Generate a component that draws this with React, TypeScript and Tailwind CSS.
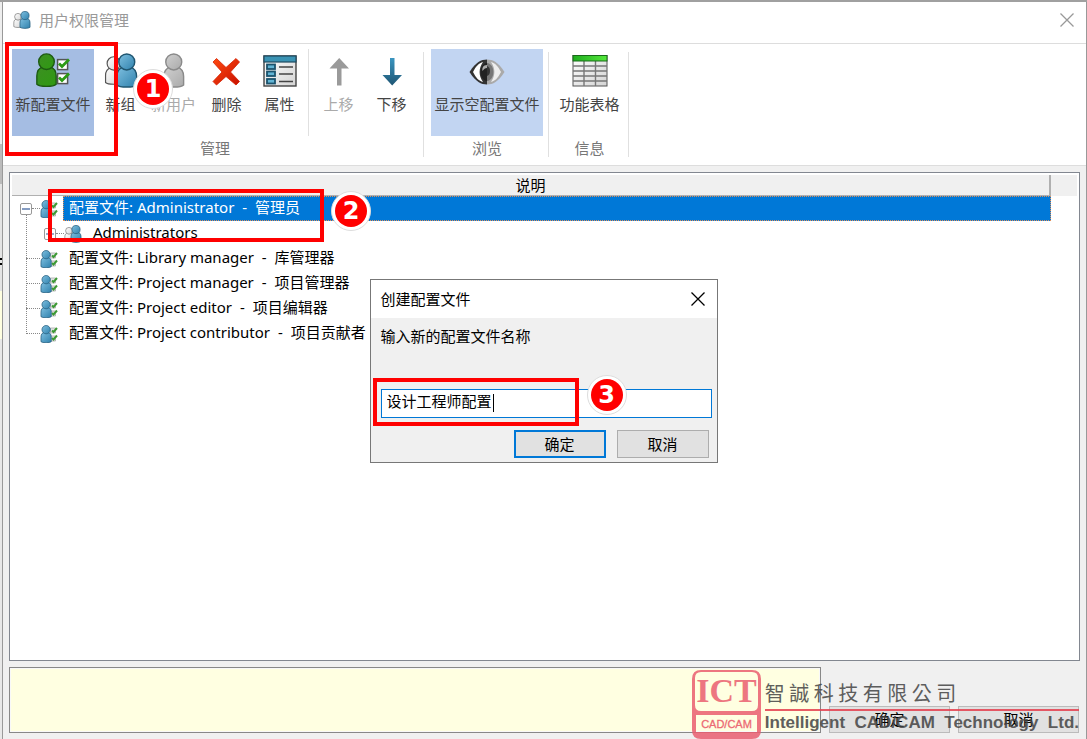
import { useState } from "react";
import type { ReactNode } from "react";

const profiles = [
  { name: "Library manager", local: "库管理器" },
  { name: "Project manager", local: "项目管理器" },
  { name: "Project editor", local: "项目编辑器" },
  { name: "Project contributor", local: "项目贡献者" }
];

const BODY = "M2 34 V25 C2 18 5 16 9 15 H16 C20 16 23 18 23 25 V34 C20 37 5 37 2 34 Z";

function Person({ x, y, scale, fill, stroke }: { x: number; y: number; scale: number; fill: string; stroke: string }) {
  return (
    <g transform={`translate(${x} ${y}) scale(${scale})`} fill={fill} stroke={stroke} strokeWidth="1.5">
      <path d={BODY} />
      <circle cx="12.5" cy="9.5" r="8.5" />
    </g>
  );
}

function Defs() {
  return (
    <svg className="absolute size-0" aria-hidden="true">
      <defs>
        <linearGradient id="green" x2="1" y2="1"><stop offset="0" stopColor="#3c8f22" /><stop offset="1" stopColor="#2f9a12" /></linearGradient>
        <linearGradient id="blue" x2="1" y2="1"><stop offset="0" stopColor="#7fc0e0" /><stop offset="1" stopColor="#2f81ad" /></linearGradient>
        <linearGradient id="silver" x2="1" y2="1"><stop offset="0" stopColor="#fff" /><stop offset="1" stopColor="#d4d4d4" /></linearGradient>
        <linearGradient id="gray" x2="1" y2="1"><stop offset="0" stopColor="#d0d0d0" /><stop offset="1" stopColor="#aaa" /></linearGradient>
        <linearGradient id="red" x2="1" y2="1"><stop offset="0" stopColor="#ff4a10" /><stop offset="1" stopColor="#c81000" /></linearGradient>
        <linearGradient id="lime" x2="1"><stop offset="0" stopColor="#1fae1f" /><stop offset="1" stopColor="#55e83c" /></linearGradient>
        <linearGradient id="steel" x2="0" y2="1"><stop offset="0" stopColor="#3a95c0" /><stop offset="1" stopColor="#1f5674" /></linearGradient>
      </defs>
    </svg>
  );
}

function ProfileIcon() {
  return (
    <svg viewBox="0 0 36 36" className="size-9 shrink-0">
      <Person x={0} y={0} scale={0.92} fill="url(#green)" stroke="#1d5a12" />
      <g fill="#fff" stroke="#555" strokeWidth="1.5">
        <rect x="22.6" y="6.6" width="10" height="10" />
        <rect x="22.6" y="20.6" width="10" height="10" />
      </g>
      <path d="M24 10.5 L27 13.5 L34 6.5 M24 24.5 L27 27.5 L34 20.5" fill="none" stroke="#2b9a14" strokeWidth="2.8" />
    </svg>
  );
}

function GroupIcon() {
  return (
    <svg viewBox="0 0 36 36" className="size-9 shrink-0">
      <Person x={1} y={3} scale={0.78} fill="url(#silver)" stroke="#555" />
      <Person x={12} y={0} scale={0.94} fill="url(#blue)" stroke="#1f5570" />
    </svg>
  );
}

function UserIcon() {
  return (
    <svg viewBox="0 0 36 36" className="size-9 shrink-0">
      <Person x={6} y={0} scale={0.94} fill="url(#gray)" stroke="#8a8a8a" />
    </svg>
  );
}

function DeleteIcon() {
  return (
    <svg viewBox="0 0 36 36" className="size-9 shrink-0">
      <path d="M4 9 L7.5 5.5 L17 14.5 L27 5.5 L30.500 9 L21.500 19 L30.500 28.5 L27 32 L17 23.500 L7.500 32 L4 28.500 L13 19 Z" fill="url(#red)" stroke="#d42000" strokeWidth="0.8" strokeLinejoin="round" />
    </svg>
  );
}

function PropertiesIcon() {
  return (
    <svg viewBox="0 0 36 36" className="size-9 shrink-0">
      <rect x="2" y="3" width="32" height="30" fill="url(#silver)" stroke="#444" strokeWidth="1.4" />
      <rect x="2" y="3" width="32" height="6" fill="#3a93b4" stroke="#1f4a60" strokeWidth="1.2" />
      <g fill="#62b4d4" stroke="#1b526c" strokeWidth="1.8">
        <rect x="5" y="11.500" width="8" height="4.500" />
        <rect x="5" y="18.500" width="8" height="4.500" />
        <rect x="5" y="26" width="8" height="4.500" />
      </g>
      <path d="M17 14 H31 M17 21 H31 M17 28.500 H31" stroke="#444" strokeWidth="1.6" />
    </svg>
  );
}

function ArrowIcon({ down }: { down?: boolean }) {
  return (
    <svg viewBox="0 0 36 36" className="size-9 shrink-0">
      {down ? (
        <path d="M16 5 H20.500 V22 H28 L18.200 32.500 L8.500 22 H16 Z" fill="url(#steel)" />
      ) : (
        <path d="M16 32.500 H20.500 V15.500 H28 L18.200 5 L8.500 15.500 H16 Z" fill="#9a9a9a" />
      )}
    </svg>
  );
}

function EyeIcon() {
  return (
    <svg viewBox="0 0 36 36" className="size-9 shrink-0">
      <path d="M0.500 19 C7 9 12 6.500 18 6.500 V31.500 C12 31.500 7 29 0.500 19 Z" fill="#333" />
      <path d="M35.500 19 C29 9 24 6.500 18 6.500 V31.500 C24 31.500 29 29 35.500 19 Z" fill="#aaa" />
      <path d="M4 19 C7 13 10 10 14 9 C9.500 16 9.500 22 14 29 C10 28 7 25 4 19 Z" fill="#fff" />
      <path d="M32 19 C29 13 26 10 22 9 C26.500 16 26.500 22 22 29 C26 28 29 25 32 19 Z" fill="#eee" />
      <path d="M18 10 V28 C9.500 27 9.500 11 18 10 Z" fill="#222" />
      <path d="M18 10 V28 C26.500 27 26.500 11 18 10 Z" fill="#777" />
      <path d="M18 12 C14 12 13 15 13.500 18 C15 16 16 15 18 15 Z" fill="#aaa" />
      <path d="M18 13 C22 14 22 22 18 23 Z" fill="#333" />
    </svg>
  );
}

function TableIcon() {
  return (
    <svg viewBox="0 0 36 36" className="size-9 shrink-0">
      <rect x="1" y="2.500" width="34" height="30.500" fill="url(#silver)" stroke="#555" />
      <path d="M1 13 H35 M1 18 H35 M1 23 H35 M1 28 H35 M12 8 V33 M23.500 8 V33" stroke="#777" strokeWidth="1.400" />
      <rect x="1" y="2.500" width="34" height="5.500" fill="url(#lime)" stroke="#1a6a1a" />
    </svg>
  );
}

function SmallProfileIcon() {
  return (
    <svg viewBox="0 0 18 18" className="size-[18px] shrink-0">
      <path d="M10.500 3 H15.500 V8 H10.500 Z M10.500 11 H15.500 V16 H10.500 Z" fill="#e4e4e4" stroke="#aaa" strokeWidth="0.800" />
      <path d="M12 5.500 L13.500 7 L17 3 M12 13 L13.500 14.500 L17 10.500" fill="none" stroke="#3d9a34" strokeWidth="2" />
      <Person x={0} y={0} scale={0.49} fill="url(#blue)" stroke="#245c7c" />
    </svg>
  );
}

function SmallGroupIcon() {
  return (
    <svg viewBox="0 0 18 18" className="size-[18px] shrink-0">
      <Person x={0} y={2} scale={0.4} fill="url(#silver)" stroke="#666" />
      <Person x={6} y={0} scale={0.48} fill="url(#blue)" stroke="#245c7c" />
    </svg>
  );
}

function CloseIcon() {
  return (
    <svg viewBox="0 0 14 14" className="size-[14px]">
      <path d="M0.500 0.500 L13.500 13.500 M13.500 0.500 L0.500 13.500" stroke="currentColor" strokeWidth="1.300" />
    </svg>
  );
}

function Tool({ icon, label, className = "w-[53px]", disabled }: { icon: ReactNode; label: string; className?: string; disabled?: boolean }) {
  return (
    <button disabled={disabled} className={`flex h-[87px] shrink-0 flex-col items-center gap-[5px] pt-1 leading-5 whitespace-nowrap text-[#444] disabled:text-[#aaa] ${className}`}>
      {icon}
      {label}
    </button>
  );
}

function ToolGroup({ title, children }: { title: string; children: ReactNode }) {
  return (
    <section className="flex flex-col border-r border-[#e0e0e0] pr-[5px] pl-[7px]">
      <div className="-mt-[3px] flex">{children}</div>
      <h2 className="mt-[2px] text-center leading-5 text-[#777]">{title}</h2>
    </section>
  );
}

function Frame({ className }: { className: string }) {
  return <span className={`pointer-events-none absolute z-10 border-4 border-[#ff0000] ${className}`} />;
}

function Step({ n, className }: { n: number; className: string }) {
  return (
    <span className={`pointer-events-none absolute z-20 flex size-10 items-center justify-center rounded-full border border-[#ddd] bg-white ${className}`}>
      <span className="flex size-8 items-center justify-center rounded-full bg-[#ff0000] font-['DejaVu_Sans',sans-serif] text-2xl font-bold text-white">{n}</span>
    </span>
  );
}

function Expander({ open }: { open?: boolean }) {
  return (
    <button aria-label={open ? "折叠" : "展开"} className="flex size-3 shrink-0 items-center justify-center rounded-xs border border-[#999] bg-white text-[#345a9a]">
      <svg viewBox="0 0 8 8" className="size-2">
        <path d={open ? "M0 4 H8" : "M0 4 H8 M4 0 V8"} stroke="currentColor" strokeWidth="1.200" />
      </svg>
    </button>
  );
}

function ProfileName({ name, local }: { name: string; local: string }) {
  return (
    <>
      配置文件: {name} <span className="mx-1">-</span> {local}
    </>
  );
}

function Watermark() {
  return (
    <div className="pointer-events-none absolute right-2 bottom-0 flex items-end gap-1 opacity-85">
      <svg viewBox="0 0 69 70" className="h-[70px] w-[69px] shrink-0">
        <path
          fillRule="evenodd"
          fill="#ea5f70"
          d="M9 1 H60 Q69 1 69 10 V61 Q69 70 60 70 H9 Q0 70 0 61 V10 Q0 1 9 1 Z M9 3 Q3 3 3 9 V36 Q3 42 9 42 H60 Q66 42 66 36 V9 Q66 3 60 3 Z M4 46 V63 H65 V46 Z"
        />
        <text x="34.500" y="33" textAnchor="middle" fontFamily="Liberation Serif, serif" fontWeight="700" fontSize="34" fill="#ea5f70">ICT</text>
        <text x="34.500" y="59" textAnchor="middle" fontFamily="Liberation Sans, sans-serif" fontSize="11" fill="#ea4f62" stroke="#ea4f62" strokeWidth="0.300">CAD/CAM</text>
      </svg>
      <div className="pb-1 whitespace-pre text-[#444]">
        <p className="font-['Noto_Sans_CJK_TC',sans-serif] text-xl leading-8">智 誠 科 技 有 限 公 司</p>
        <div className="h-[2px] bg-[#e5404f]" />
        <p className="font-['Liberation_Sans',sans-serif] text-[17px] leading-6 font-bold">Intelligent  CAD/CAM  Technology  Ltd.</p>
      </div>
    </div>
  );
}

export default function App() {
  const [name, setName] = useState("设计工程师配置");

  return (
    <div className="relative flex min-h-screen overflow-hidden border-t-2 border-[#a0a0a0] bg-[#e8e8e8] font-['Noto_Sans','Noto_Sans_CJK_SC',sans-serif] text-[15px]">
      <Defs />
      <div className="flex w-[2px] shrink-0 flex-col">
        <div className="h-[142px] bg-[#eee]" />
        <div className="h-10 bg-[#bbb]" />
        <div className="h-[74px] bg-[#e4e4e4]" />
        <div className="h-[7px] border-y-2 border-black" />
        <div className="h-[26px] bg-[#e4e4e4]" />
        <div className="h-12 bg-[#ffffe1]" />
      </div>

      <main className="flex min-w-0 flex-1 flex-col border-x border-[#999] bg-[#f0f0f0]">
        <header className="flex h-[41px] shrink-0 items-center gap-2 bg-white pr-3 pl-[10px] pb-[5px] text-[#999]">
          <SmallGroupIcon />
          <h1>用户权限管理</h1>
          <button aria-label="关闭" className="ml-auto"><CloseIcon /></button>
        </header>

        <nav className="flex h-[123px] shrink-0 border-y border-[#ddd] bg-white pt-2 pb-2 pl-[2px]">
          <ToolGroup title="管理">
            <div className="relative">
              <Tool icon={<ProfileIcon />} label="新配置文件" className="w-[82px] bg-[#a5bde3]" />
              <Frame className="-top-[7px] -left-[7px] h-[114px] w-[113px]" />
              <Step n={1} className="top-5 left-[121px]" />
            </div>
            <Tool icon={<GroupIcon />} label="新组" />
            <Tool icon={<UserIcon />} label="新用户" disabled />
            <Tool icon={<DeleteIcon />} label="删除" />
            <Tool icon={<PropertiesIcon />} label="属性" />
            <div className="mr-[3px] ml-[2px] w-px bg-[#e0e0e0]" />
            <Tool icon={<ArrowIcon />} label="上移" disabled />
            <Tool icon={<ArrowIcon down />} label="下移" />
          </ToolGroup>
          <ToolGroup title="浏览">
            <Tool icon={<EyeIcon />} label="显示空配置文件" className="w-[112px] bg-[#c2d5f2]" />
          </ToolGroup>
          <ToolGroup title="信息">
            <Tool icon={<TableIcon />} label="功能表格" className="w-[67px]" />
          </ToolGroup>
        </nav>

        <section className="mx-[6px] mt-[6px] flex flex-1 flex-col border border-[#828790] bg-white p-[2px]">
          <div className="flex h-[21px] shrink-0 bg-[#f0f0f0]">
            <div className="flex-1 border-r-2 border-b border-[#b0b0b0] text-center leading-5">说明</div>
            <div className="w-[26px]" />
          </div>
          <ul className="relative">
            <li className="flex h-[25px] items-center pr-[26px] pl-2">
              <Expander open />
              <span className="w-2 border-t border-dotted border-[#888]" />
              <SmallProfileIcon />
              <span className="ml-[5px] flex-1 border border-dotted border-[#e0905a] bg-[#0078d7] px-[5px] pb-[2px] leading-[21px] text-white">
                <ProfileName name="Administrator" local="管理员" />
              </span>
            </li>
            <li className="flex h-[25px] items-center pl-8">
              <Expander />
              <span className="w-2 border-t border-dotted border-[#888]" />
              <SmallGroupIcon />
              <span className="ml-[11px] pb-[2px]">Administrators</span>
            </li>
            {profiles.map((profile) => (
              <li key={profile.name} className="flex h-[25px] items-center pl-[14px]">
                <span className="w-[14px] border-t border-dotted border-[#888]" />
                <SmallProfileIcon />
                <span className="ml-[11px] pb-[2px]"><ProfileName {...profile} /></span>
              </li>
            ))}
            <span className="absolute top-[19px] bottom-3 left-[14px] border-l border-dotted border-[#888]" />
            <Frame className="-top-[7px] left-9 h-[53px] w-[276px]" />
            <Step n={2} className="-top-[5px] left-[319px]" />
          </ul>
        </section>

        <footer className="mx-[6px] mt-[6px] mb-[6px] flex shrink-0 items-end gap-2 pr-px">
          <div className="h-[66px] flex-1 border border-[#888] bg-[#ffffe1] inset-ring inset-ring-[#f8f8f8]" />
          <button className="h-[27px] w-[121px] border border-[#bbb] bg-[#e1e1e1]">确定</button>
          <button className="h-[27px] w-[121px] border border-[#bbb] bg-[#e1e1e1]">取消</button>
        </footer>
      </main>

      <Watermark />

      <div className="fixed inset-0 z-30 flex items-center justify-center pt-[3px]">
        <form role="dialog" aria-labelledby="dialog-title" onSubmit={(event) => event.preventDefault()} className="relative w-[348px] border border-[#777] bg-[#f0f0f0]">
          <div className="flex h-[38px] items-center justify-between bg-white pr-3 pl-[10px]">
            <h2 id="dialog-title">创建配置文件</h2>
            <button type="button" aria-label="关闭"><CloseIcon /></button>
          </div>
          <div className="px-[10px] pt-[6px] pb-1">
            <label htmlFor="profile-name" className="block leading-6">输入新的配置文件名称</label>
            <div className="relative mt-[41px] -mr-[5px] flex h-[29px] bg-white">
              <input id="profile-name" value={name} onChange={(event) => setName(event.target.value)} className="w-full border border-solid border-[#0078d7] px-[5px] pb-1 outline-none" />
              <span className="absolute top-[5px] left-[112px] h-[18px] w-px bg-black" />
            </div>
            <div className="mt-3 -mr-[2px] flex justify-end gap-[11px]">
              <button className="h-7 w-[92px] border-2 border-[#0078d7] bg-[#e1e1e1]">确定</button>
              <button type="button" className="h-7 w-[92px] border border-[#adadad] bg-[#e1e1e1]">取消</button>
            </div>
          </div>
          <Frame className="top-[98px] left-[2px] h-[48px] w-[206px]" />
          <Step n={3} className="top-[95px] left-[216px]" />
        </form>
      </div>
    </div>
  );
}
